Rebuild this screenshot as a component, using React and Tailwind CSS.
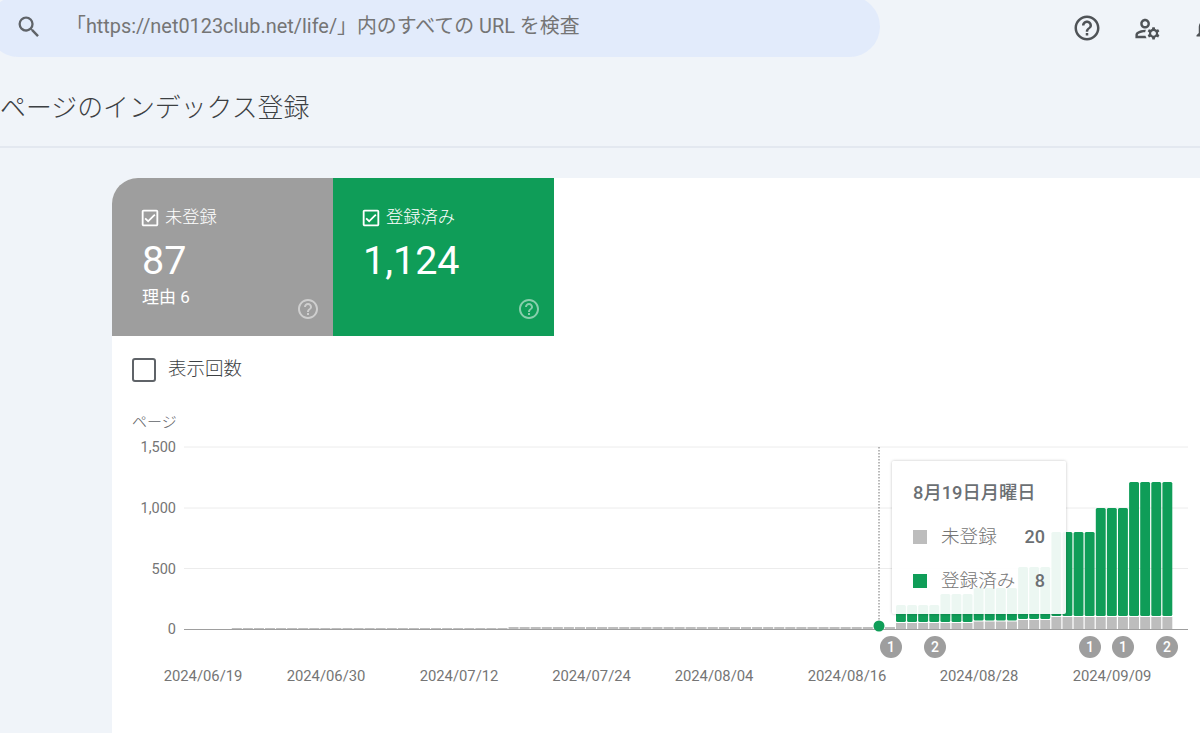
import React from "react";
import { MdSearch, MdHelpOutline, MdOutlineManageAccounts, MdNotificationsNone, MdOutlineCheckBox } from "react-icons/md";

const font = { fontFamily: '"Roboto", "Noto Sans CJK JP", sans-serif' };
const P = 11.1;
const X0 = 896;
const bars = [];
for (let i = 0; i < 25; i++) {
  const green = i < 4 ? 605 : i < 7 ? 594 : i < 11 ? 588 : i < 14 ? 567 : i < 18 ? 532 : i < 21 ? 508 : 482;
  const gray = i < 7 ? 623 : i < 11 ? 621.5 : i < 14 ? 620 : 617;
  bars.push({ x: X0 + i * P, green, gray });
}
const small = [];
for (let i = 60; i >= 1; i--) {
  const x = X0 - i * 11.07;
  small.push({ x, top: x > 505 ? 627 : 628 });
}
const yAxis = [
  ["1,500", 447],
  ["1,000", 508],
  ["500", 568.5],
  ["0", 629],
];
const xAxis = [
  ["2024/06/19", 203],
  ["2024/06/30", 326],
  ["2024/07/12", 459],
  ["2024/07/24", 591.5],
  ["2024/08/04", 714],
  ["2024/08/16", 847],
  ["2024/08/28", 979],
  ["2024/09/09", 1112],
];
const annotations = [
  ["1", 891],
  ["2", 935],
  ["1", 1090],
  ["1", 1123],
  ["2", 1167],
];

function Tile({ color, label, value, sub }) {
  return (
    <div className={`relative h-[158px] w-[221px] pl-[30px] pt-[29px] text-white ${color}`}>
      <div className="flex h-[21px] items-center gap-[4px] text-[17.3px] leading-[21px]">
        <MdOutlineCheckBox className="ml-[-3px] text-[22px]" />
        <span className="font-light">{label}</span>
      </div>
      <div className="mt-[9px] text-[39.5px] leading-[47px]">{value}</div>
      {sub && <div className="mt-[3px] text-[17px] leading-[20px]">{sub}</div>}
      <MdHelpOutline className="absolute bottom-[15px] right-[13px] text-[24px] opacity-50" />
    </div>
  );
}

function Row({ swatch, label, value, className }) {
  return (
    <div className={`flex items-center text-[18.6px] leading-[24px] ${className}`}>
      <span className={`h-[14px] w-[14px] ${swatch}`} />
      <span className="ml-[14px] flex-1 font-light text-[#757575]">{label}</span>
      <span className="text-[18px] font-medium text-[#6b6f73]">{value}</span>
    </div>
  );
}

export default function App() {
  return (
    <div className="h-[733px] w-[1200px] overflow-hidden bg-[#f0f4f9]" style={font}>
      <header className="relative flex h-[57px] items-start">
        <div className="ml-[-12px] mt-[-4px] flex h-[61px] w-[892px] items-center rounded-[31px] bg-[#e2ebfb] pl-[27px]">
          <MdSearch className="text-[28px] text-[#5f6368]" />
          <span className="ml-[23px] mt-[1px] text-[19.9px] text-[#757575]">「https://net0123club.net/life/」内のすべての URL を検査</span>
        </div>
        <div className="ml-auto mr-[-19px] mt-[13px] flex items-center gap-[30px] text-[#4f5357]">
          <MdHelpOutline className="text-[30px]" />
          <MdOutlineManageAccounts className="ml-[1px] text-[29px]" />
          <MdNotificationsNone className="text-[27px]" />
        </div>
      </header>
      <div className="flex h-[91px] items-center border-b-2 border-[#e3e8f0] pt-[12px]">
        <h1 className="text-[25.9px] font-light leading-[34px] text-[#3c4043]">ページのインデックス登録</h1>
      </div>
      <main className="ml-[112px] mt-[30px] h-[560px] overflow-hidden rounded-tl-[26px] bg-white">
        <div className="flex">
          <Tile color="bg-[#9e9e9e]" label="未登録" value="87" sub="理由 6" />
          <Tile color="bg-[#0f9d58]" label="登録済み" value="1,124" />
        </div>
        <label className="ml-[20px] mt-[22px] flex h-[24px] items-center gap-[12px]">
          <span className="h-[24px] w-[24px] rounded-[3px] border-2 border-[#5f6368]" />
          <span className="text-[18.5px] font-light text-[#3c4043]">表示回数</span>
        </label>
        <div className="ml-[20px] mt-[30px] text-[15px] font-light leading-[20px] text-[#5f6368]">ページ</div>
        <div className="relative h-[323px]">
          <svg viewBox="112 432 1088 323" className="block h-[323px] w-[1088px]" style={{ fontFamily: font.fontFamily }}>
            {yAxis.slice(0, 3).map(([, y]) => (
              <line key={y} x1="184" x2="1188" y1={y} y2={y} stroke="#ececec" />
            ))}
            {yAxis.map(([t, y]) => (
              <text key={t} x="176" y={y + 5} textAnchor="end" fontSize="14.5" fill="#757575">{t}</text>
            ))}
            {small.map((b) => (
              <rect key={b.x} x={b.x} y={b.top} width={10} height={629 - b.top} fill="#bdbdbd" />
            ))}
            {bars.map((b) => (
              <g key={b.x}>
                <rect x={b.x} y={b.green} width={9.9} height={b.gray - b.green - 1} rx="1.5" fill="#0f9d58" />
                <rect x={b.x} y={b.gray} width={9.9} height={629 - b.gray} fill="#bdbdbd" />
              </g>
            ))}
            <line x1="184" x2="1188" y1="629.5" y2="629.5" stroke="#9e9e9e" />
            <line x1="879" x2="879" y1="447" y2="626" stroke="#757575" strokeDasharray="1.5 1.5" />
            <circle cx="879" cy="626" r="5.5" fill="#0f9d58" />
            {annotations.map(([t, x]) => (
              <g key={x}>
                <circle cx={x} cy="647" r="11" fill="#9e9e9e" />
                <text x={x} y="652" textAnchor="middle" fontSize="14" fontWeight="500" fill="#fff">{t}</text>
              </g>
            ))}
            {xAxis.map(([t, x]) => (
              <text key={t} x={x} y="681" textAnchor="middle" fontSize="14.8" fill="#757575">{t}</text>
            ))}
          </svg>
          <div className="absolute left-[780px] top-[29px] h-[153px] w-[174px] rounded-[2px] bg-white/[0.92] pl-[21px] pr-[21px] pt-[21px] shadow-[0_0_3px_rgba(0,0,0,0.25)]">
            <div className="text-[18.3px] font-medium leading-[22px] text-[#6b6f73]">8月19日月曜日</div>
            <Row className="mt-[21px]" swatch="bg-[#bdbdbd]" label="未登録" value="20" />
            <Row className="mt-[20px]" swatch="bg-[#0f9d58]" label="登録済み" value="8" />
          </div>
        </div>
      </main>
    </div>
  );
}
